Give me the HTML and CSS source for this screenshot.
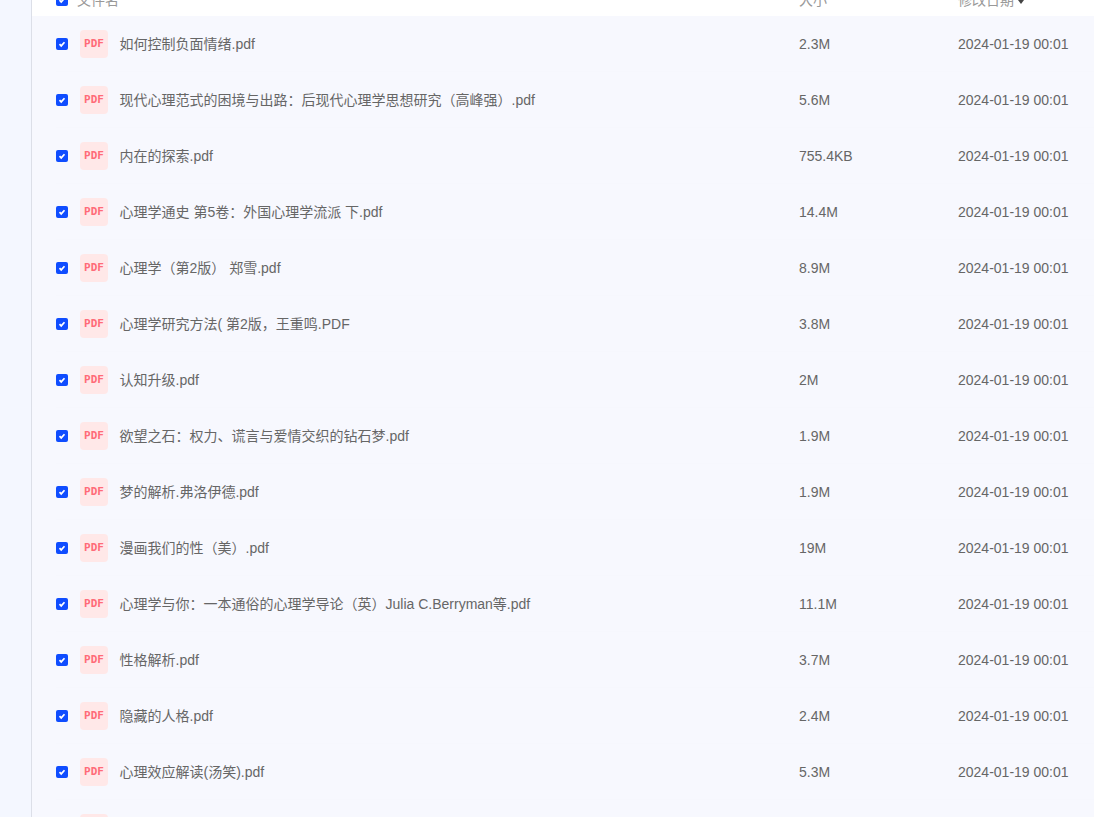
FILE: index.html
```html
<!DOCTYPE html>
<html lang="zh-CN">
<head>
<meta charset="utf-8">
<title>文件列表</title>
<link rel="stylesheet" href="styles.css">
</head>
<body>
<div class="page">
  <aside class="side"></aside>
  <main class="main">
    <div class="head">
      <span class="box"><svg viewBox="0 0 12 12" class="tick"><path d="M3.5 6.2 5.2 7.9 8.5 4.2"/></svg></span>
      <span class="hname">文件名</span>
      <span class="hsize">大小</span>
      <span class="hdate">修改日期<i class="caret"></i></span>
    </div>
    <div class="row"><span class="box"><svg viewBox="0 0 12 12" class="tick"><path d="M3.5 6.2 5.2 7.9 8.5 4.2"/></svg></span><span class="pdf">PDF</span><span class="name">如何控制负面情绪.pdf</span><span class="size">2.3M</span><span class="date">2024-01-19 00:01</span></div>
    <div class="row"><span class="box"><svg viewBox="0 0 12 12" class="tick"><path d="M3.5 6.2 5.2 7.9 8.5 4.2"/></svg></span><span class="pdf">PDF</span><span class="name">现代心理范式的困境与出路：后现代心理学思想研究（高峰强）.pdf</span><span class="size">5.6M</span><span class="date">2024-01-19 00:01</span></div>
    <div class="row"><span class="box"><svg viewBox="0 0 12 12" class="tick"><path d="M3.5 6.2 5.2 7.9 8.5 4.2"/></svg></span><span class="pdf">PDF</span><span class="name">内在的探索.pdf</span><span class="size">755.4KB</span><span class="date">2024-01-19 00:01</span></div>
    <div class="row"><span class="box"><svg viewBox="0 0 12 12" class="tick"><path d="M3.5 6.2 5.2 7.9 8.5 4.2"/></svg></span><span class="pdf">PDF</span><span class="name">心理学通史 第5卷：外国心理学流派 下.pdf</span><span class="size">14.4M</span><span class="date">2024-01-19 00:01</span></div>
    <div class="row"><span class="box"><svg viewBox="0 0 12 12" class="tick"><path d="M3.5 6.2 5.2 7.9 8.5 4.2"/></svg></span><span class="pdf">PDF</span><span class="name">心理学（第2版） 郑雪.pdf</span><span class="size">8.9M</span><span class="date">2024-01-19 00:01</span></div>
    <div class="row"><span class="box"><svg viewBox="0 0 12 12" class="tick"><path d="M3.5 6.2 5.2 7.9 8.5 4.2"/></svg></span><span class="pdf">PDF</span><span class="name">心理学研究方法( 第2版，王重鸣.PDF</span><span class="size">3.8M</span><span class="date">2024-01-19 00:01</span></div>
    <div class="row"><span class="box"><svg viewBox="0 0 12 12" class="tick"><path d="M3.5 6.2 5.2 7.9 8.5 4.2"/></svg></span><span class="pdf">PDF</span><span class="name">认知升级.pdf</span><span class="size">2M</span><span class="date">2024-01-19 00:01</span></div>
    <div class="row"><span class="box"><svg viewBox="0 0 12 12" class="tick"><path d="M3.5 6.2 5.2 7.9 8.5 4.2"/></svg></span><span class="pdf">PDF</span><span class="name">欲望之石：权力、谎言与爱情交织的钻石梦.pdf</span><span class="size">1.9M</span><span class="date">2024-01-19 00:01</span></div>
    <div class="row"><span class="box"><svg viewBox="0 0 12 12" class="tick"><path d="M3.5 6.2 5.2 7.9 8.5 4.2"/></svg></span><span class="pdf">PDF</span><span class="name">梦的解析.弗洛伊德.pdf</span><span class="size">1.9M</span><span class="date">2024-01-19 00:01</span></div>
    <div class="row"><span class="box"><svg viewBox="0 0 12 12" class="tick"><path d="M3.5 6.2 5.2 7.9 8.5 4.2"/></svg></span><span class="pdf">PDF</span><span class="name">漫画我们的性（美）.pdf</span><span class="size">19M</span><span class="date">2024-01-19 00:01</span></div>
    <div class="row"><span class="box"><svg viewBox="0 0 12 12" class="tick"><path d="M3.5 6.2 5.2 7.9 8.5 4.2"/></svg></span><span class="pdf">PDF</span><span class="name">心理学与你：一本通俗的心理学导论（英）Julia C.Berryman等.pdf</span><span class="size">11.1M</span><span class="date">2024-01-19 00:01</span></div>
    <div class="row"><span class="box"><svg viewBox="0 0 12 12" class="tick"><path d="M3.5 6.2 5.2 7.9 8.5 4.2"/></svg></span><span class="pdf">PDF</span><span class="name">性格解析.pdf</span><span class="size">3.7M</span><span class="date">2024-01-19 00:01</span></div>
    <div class="row"><span class="box"><svg viewBox="0 0 12 12" class="tick"><path d="M3.5 6.2 5.2 7.9 8.5 4.2"/></svg></span><span class="pdf">PDF</span><span class="name">隐藏的人格.pdf</span><span class="size">2.4M</span><span class="date">2024-01-19 00:01</span></div>
    <div class="row"><span class="box"><svg viewBox="0 0 12 12" class="tick"><path d="M3.5 6.2 5.2 7.9 8.5 4.2"/></svg></span><span class="pdf">PDF</span><span class="name">心理效应解读(汤笑).pdf</span><span class="size">5.3M</span><span class="date">2024-01-19 00:01</span></div>
    <div class="row"><span class="pdf">PDF</span></div>
  </main>
</div>
</body>
</html>
```
FILE: styles.css
```css
html, body {
  margin: 0;
  height: 100%;
  overflow: hidden;
  background: #f7f8fe;
}
.page {
  display: flex;
  height: 817px;
  overflow: hidden;
  font: 14px/20px "Liberation Sans", "Noto Sans CJK SC", sans-serif;
  color: #666;
}
.side {
  flex: 0 0 31px;
  background: #f4f7ff;
  border-right: 1px solid #dcdfe8;
}
.main {
  flex: 1;
  min-width: 0;
  background: #f7f8fe;
}
.head {
  display: grid;
  grid-template-columns: 12px 1fr 159px 136px;
  align-items: center;
  height: 32px;
  margin-top: -16px;
  padding-left: 24px;
  background: #fff;
  color: #999;
}
.hname {
  padding-left: 9px;
}
.caret {
  display: inline-block;
  margin-left: 4px;
  vertical-align: 1px;
  border: 3px solid transparent;
  border-top: 4px solid #444;
  border-bottom: 0;
}
.row {
  display: grid;
  grid-template-columns: 12px 12px 28px 11.5px 1fr 159px 136px;
  align-items: center;
  height: 55px;
  margin-left: 24px;
  border-bottom: 1px solid #f6f7fd;
}
.box {
  display: flex;
  width: 12px;
  height: 12px;
  border-radius: 2px;
  background: #0f4dff;
}
.tick {
  width: 12px;
  height: 12px;
  fill: none;
  stroke: #fff;
  stroke-width: 1.7;
}
.pdf {
  grid-column: 3;
  display: flex;
  align-items: center;
  justify-content: center;
  height: 28px;
  border-radius: 4px;
  background: #ffe8e8;
  color: #ff6b78;
  font: bold 11px/1 "DejaVu Sans Mono", monospace;
}
.name {
  grid-column: 5;
  white-space: nowrap;
}
.size {
  grid-column: 6;
}
.date {
  grid-column: 7;
}
```
